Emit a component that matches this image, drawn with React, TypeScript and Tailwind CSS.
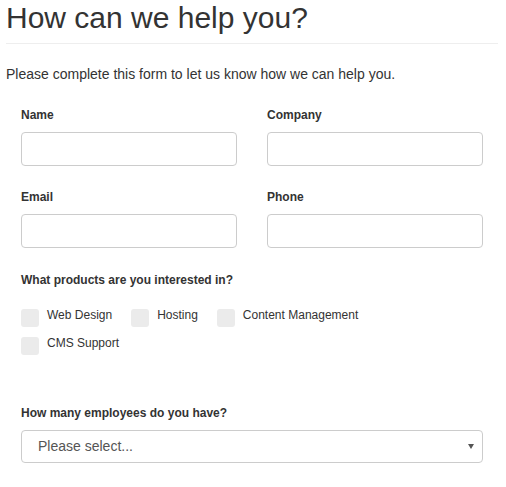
import React from "react";

const products = ["Web Design", "Hosting", "Content Management", "CMS Support"];

function Field({ label }: { label: string }) {
  return (
    <div>
      <label className="block text-[12px] leading-[17px] font-bold text-[#333] mb-[8px]">{label}</label>
      <input
        type="text"
        className="block w-full h-[34px] rounded-[4px] border border-[#ccc] bg-white px-3 text-[14px] outline-none"
      />
    </div>
  );
}

export default function App() {
  return (
    <div className="w-[506px] h-[487px] overflow-hidden bg-white text-[#333] font-['Liberation_Sans',Arial,sans-serif]">
      <div className="w-[492px] ml-[6px]">
        <h2 className="pt-px text-[30px] leading-[33px] font-normal">How can we help you?</h2>
        <hr className="mt-[9px] border-0 border-t border-[#eee]" />
        <p className="mt-[20px] text-[14px] leading-[20px]">
          Please complete this form to let us know how we can help you.
        </p>

        <form className="px-[15px]">
          <div className="mt-[23px] grid grid-cols-2 gap-x-[30px] gap-y-[23px]">
            <Field label="Name" />
            <Field label="Company" />
            <Field label="Email" />
            <Field label="Phone" />
          </div>

          <div className="mt-[24px]">
            <p className="text-[12px] leading-[17px] font-bold">What products are you interested in?</p>
            <div className="mt-[20px] flex flex-wrap gap-y-[10px] max-w-[400px]">
              {products.map((p) => (
                <label key={p} className="flex items-start mr-[19px]">
                  <span className="block w-[18px] h-[18px] rounded-[3px] bg-[#ebebeb]" />
                  <span className="ml-[8px] text-[12px] leading-[12px] text-[#333]">{p}</span>
                </label>
              ))}
            </div>
          </div>

          <div className="mt-[50px]">
            <p className="text-[12px] leading-[17px] font-bold mb-[8px]">How many employees do you have?</p>
            <div className="relative">
              <select className="block w-full h-[33px] appearance-none rounded-[4px] border border-[#ccc] bg-white pl-[16px] text-[14px] text-[#555] outline-none">
                <option>Please select...</option>
                <option>1-10</option>
                <option>11-50</option>
                <option>51-200</option>
                <option>200+</option>
              </select>
              <span className="pointer-events-none absolute right-[9px] top-[14px] w-0 h-0 border-l-[3px] border-r-[3px] border-t-[5px] border-l-transparent border-r-transparent border-t-[#555]" />
            </div>
          </div>
        </form>
      </div>
    </div>
  );
}
